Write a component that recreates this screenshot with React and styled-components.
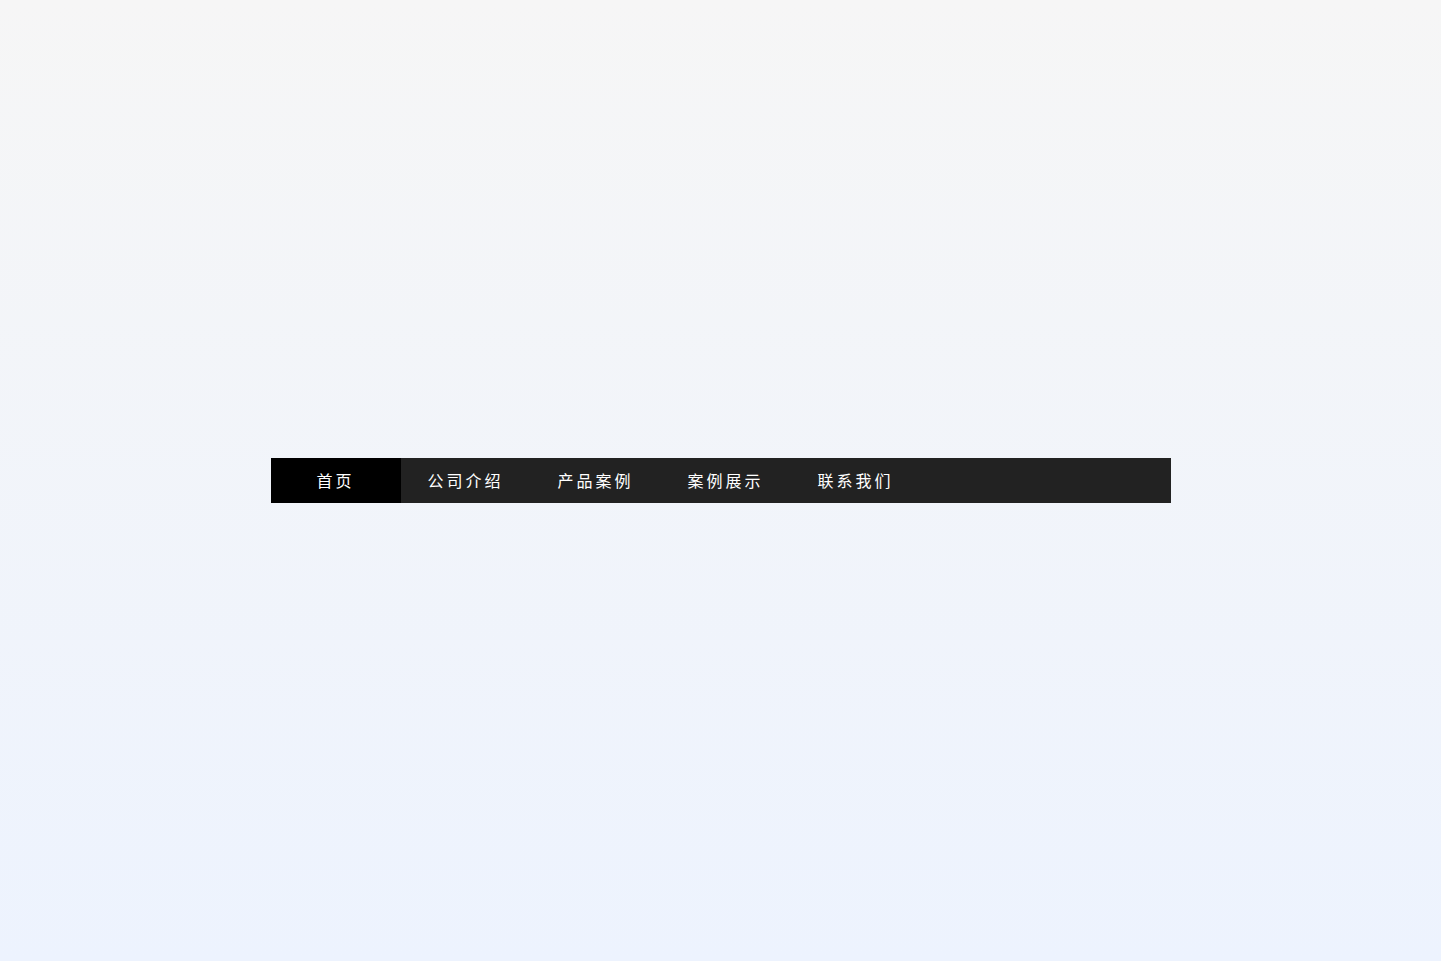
import styled, { createGlobalStyle } from "styled-components";

const GlobalStyle = createGlobalStyle`
  html, body {
    margin: 0;
    padding: 0;
  }
  body {
    font-family: "Microsoft YaHei", "Noto Sans CJK SC", "Noto Sans", sans-serif;
  }
`;

const navItems = ["首页", "公司介绍", "产品案例", "案例展示", "联系我们"];

export default function App() {
  return (
    <>
      <GlobalStyle />
      <StyledPage>
        <StyledNav>
          <ul>
            {navItems.map((item, index) => (
              <StyledNavItem key={index} $active={index === 0}>
                <a href="#">{item}</a>
              </StyledNavItem>
            ))}
          </ul>
        </StyledNav>
      </StyledPage>
    </>
  );
}

const StyledPage = styled.div`
  min-height: 100vh;
  display: flex;
  align-items: center;
  justify-content: center;
  background: linear-gradient(to bottom, #f6f6f6 0%, #edf3fe 100%);
`;

const StyledNav = styled.nav`
  width: 900px;
  height: 45px;
  background-color: #222222;
  & ul {
    display: flex;
    height: 100%;
    margin: 0;
    padding: 0;
    list-style: none;
  }
`;

const StyledNavItem = styled.li`
  width: 130px;
  height: 100%;
  background-color: ${(p) => (p.$active ? "#000000" : "transparent")};
  & a {
    display: flex;
    box-sizing: border-box;
    height: 100%;
    padding-bottom: 2px;
    align-items: center;
    justify-content: center;
    color: #ffffff;
    font-size: 16px;
    font-weight: 400;
    letter-spacing: 3px;
    text-decoration: none;
  }
`;
